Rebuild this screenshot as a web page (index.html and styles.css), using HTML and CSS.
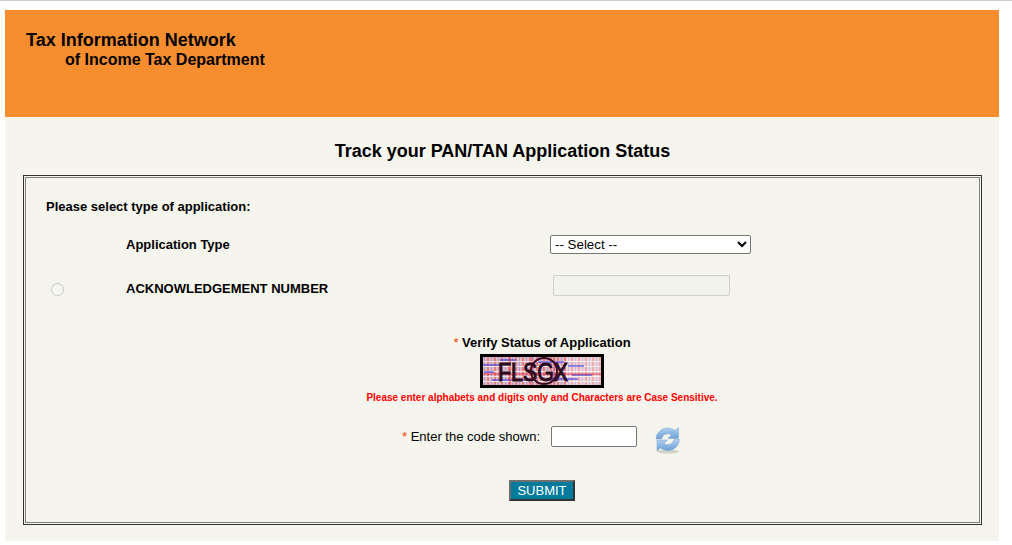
FILE: index.html
```html
<!DOCTYPE html>
<html lang="en">
<head>
  <meta charset="UTF-8" />
  <title>Track your PAN/TAN Application Status</title>
  <link rel="stylesheet" href="styles.css">
</head>
<body>
  <div class="page">
    <div class="header">
      <div class="header-title">Tax Information Network</div>
      <div class="header-sub">of Income Tax Department</div>
    </div>
    <div class="content">
      <h1>Track your PAN/TAN Application Status</h1>
      <form class="box">
        <p class="intro">Please select type of application:</p>
        <div class="row row-type">
          <span class="radio-cell"></span>
          <label class="field-label" for="appType">Application Type</label>
          <select id="appType" class="type-select">
            <option>-- Select --</option>
          </select>
        </div>
        <div class="row row-ack">
          <span class="radio-cell"><input type="radio" class="radio" disabled /></span>
          <label class="field-label" for="ackNo">ACKNOWLEDGEMENT NUMBER</label>
          <input type="text" id="ackNo" class="ack-input" disabled />
        </div>

        <div class="verify">
          <div class="verify-title"><span class="star">*</span> Verify Status of Application</div>
          <svg class="captcha" width="124" height="34" viewBox="0 0 124 34" role="img" aria-label="captcha">
            <defs>
              <pattern id="noise" width="7" height="5" patternUnits="userSpaceOnUse">
                <rect width="7" height="5" fill="#e0bcc0" />
                <rect x="0" width="2" height="5" fill="#e27f88" />
                <rect x="4" width="1" height="5" fill="#a99ad8" />
                <rect y="2" width="7" height="1" fill="#f4e4e6" />
              </pattern>
            </defs>
            <rect width="124" height="34" fill="#000" />
            <rect x="3" y="3" width="118" height="28" fill="url(#noise)" />
            <rect x="86" y="3" width="35" height="28" fill="#fff" opacity="0.35" />
            <path d="M3 11h20M58 8h26M88 12h16M12 26h34M66 25h32M4 18h10M92 21h20M20 6h16" stroke="#2a2ae0" stroke-width="1" />
            <path d="M30 3v28M52 3v28M74 3v28M3 20h118" stroke="#e81c2c" stroke-width="1" opacity="0.8" />
            <text class="captcha-text" x="18" y="27" textLength="70" lengthAdjust="spacingAndGlyphs">FLSGX</text>
            <circle cx="64" cy="17" r="13" fill="none" stroke="#3a0a20" stroke-width="2" />
          </svg>
          <div class="captcha-note">Please enter alphabets and digits only and Characters are Case Sensitive.</div>
          <div class="code-row">
            <label for="code"><span class="star">*</span> Enter the code shown:</label>
            <input type="text" id="code" class="code-input" />
            <svg class="refresh" width="28" height="28" viewBox="0 0 28 28" aria-label="refresh">
              <defs>
                <linearGradient id="blue" x1="0" y1="0" x2="0" y2="1">
                  <stop offset="0" stop-color="#b4d0ee" />
                  <stop offset="1" stop-color="#6a9fd6" />
                </linearGradient>
              </defs>
              <ellipse cx="14" cy="25.500" rx="11" ry="2" fill="#d2d2cc" />
              <path d="M2 13C2.500 6 8 2 13.500 2c3 0 5.500 1 7.500 2.500L24.500 1.500v11H14l3.500-3.500c-4-2.500-8.500-1-10 4z" fill="url(#blue)" stroke="#7aa8d6" stroke-width="0.5" />
              <path d="M25.500 13.500C25 20.500 19.500 24.500 14 24.500c-3 0-5.500-1-7.500-2.500L3 25V14h10.500L10 17.500c4 2.500 8.500 1 10-4z" fill="url(#blue)" stroke="#7aa8d6" stroke-width="0.5" />
            </svg>
          </div>
          <button type="button" class="submit">SUBMIT</button>
        </div>
      </form>
    </div>
  </div>
</body>
</html>
```

FILE: styles.css
```css
html {
  background-color: #ffffff;
}
body {
  font-family: "Liberation Sans", Arial, sans-serif;
  color: #000000;
  margin: 0;
  border-top: 1px solid #cccccc;
}
.page {
  width: 994px;
  margin: 9px 0 0 5px;
  background-color: #f5f5ed;
  padding-bottom: 16px;
}
.header {
  background-color: #f68d2e;
  height: 107px;
  padding: 20px 0 0 21px;
  box-sizing: border-box;
  font-weight: bold;
}
.header-title {
  font-size: 18px;
  line-height: 20px;
}
.header-sub {
  font-size: 16px;
  line-height: 20px;
  padding-left: 39px;
}
.content {
  padding: 0 17px 0 18px;
}
h1 {
  font-size: 18px;
  line-height: 22px;
  margin: 0;
  padding: 23px 0 13px;
  text-align: center;
}
.box {
  display: block;
  height: 350px;
  box-sizing: border-box;
  border: 1px solid #333333;
  box-shadow: inset 0 0 0 1px #f5f5ed, inset 0 0 0 2px #808080;
  padding: 0 22px;
}
.intro {
  font-size: 13px;
  font-weight: bold;
  line-height: 16px;
  margin: 0;
  padding-top: 23px;
}
.row {
  display: grid;
  grid-template-columns: 80px 424px auto;
  align-items: center;
}
.row-type {
  margin-top: 19px;
  height: 20px;
}
.row-ack {
  margin-top: 20px;
  height: 22px;
}
.field-label {
  font-weight: bold;
  font-size: 13px;
}
.row-ack .field-label {
  padding-top: 6px;
}
.radio-cell {
  display: flex;
  align-items: center;
}
.row-ack .radio-cell {
  padding-top: 8px;
}
.radio {
  width: 13px;
  height: 13px;
  margin: 0 0 0 5px;
}
.type-select {
  width: 201px;
  height: 19px;
  font-family: "Liberation Sans", Arial, sans-serif;
  font-size: 13.33px;
  padding: 0;
  background-color: #ffffff;
  border: 1px solid #767676;
  border-radius: 2px;
}
.ack-input {
  width: 177px;
  height: 21px;
  box-sizing: border-box;
  margin-left: 3px;
  border: 1px solid #cfcfc8;
  border-radius: 2px;
  background-color: #f3f3ee;
}
.verify {
  margin-top: 39px;
  padding-left: 79px;
  display: flex;
  flex-direction: column;
  align-items: center;
}
.verify-title {
  font-size: 13px;
  font-weight: bold;
  line-height: 16px;
}
.star {
  color: #f53c00;
  font-weight: normal;
}
.captcha {
  display: block;
  margin-top: 3px;
}
.captcha-text {
  font-family: "Liberation Sans", Arial, sans-serif;
  font-size: 26px;
  fill: #2a0a20;
  stroke: #2a0a20;
  stroke-width: 1px;
}
.captcha-note {
  color: #ff0000;
  font-size: 10px;
  font-weight: bold;
  line-height: 12px;
  margin-top: 4px;
}
.code-row {
  display: flex;
  align-items: center;
  font-size: 13px;
  margin-top: 18px;
  height: 28px;
}
.code-input {
  width: 86px;
  height: 21px;
  box-sizing: border-box;
  margin: 0 17px 0 11px;
  border: 1px solid #767676;
  border-radius: 2px;
  background-color: #ffffff;
}
.refresh {
  margin-top: 8px;
}
.submit {
  margin-top: 30px;
  width: 66px;
  height: 21px;
  padding: 0;
  border: 2px solid;
  border-color: #6f6f6f #333333 #333333 #6f6f6f;
  background-color: #007b9c;
  color: #ffffff;
  font-family: "Liberation Sans", Arial, sans-serif;
  font-size: 13px;
}
```
